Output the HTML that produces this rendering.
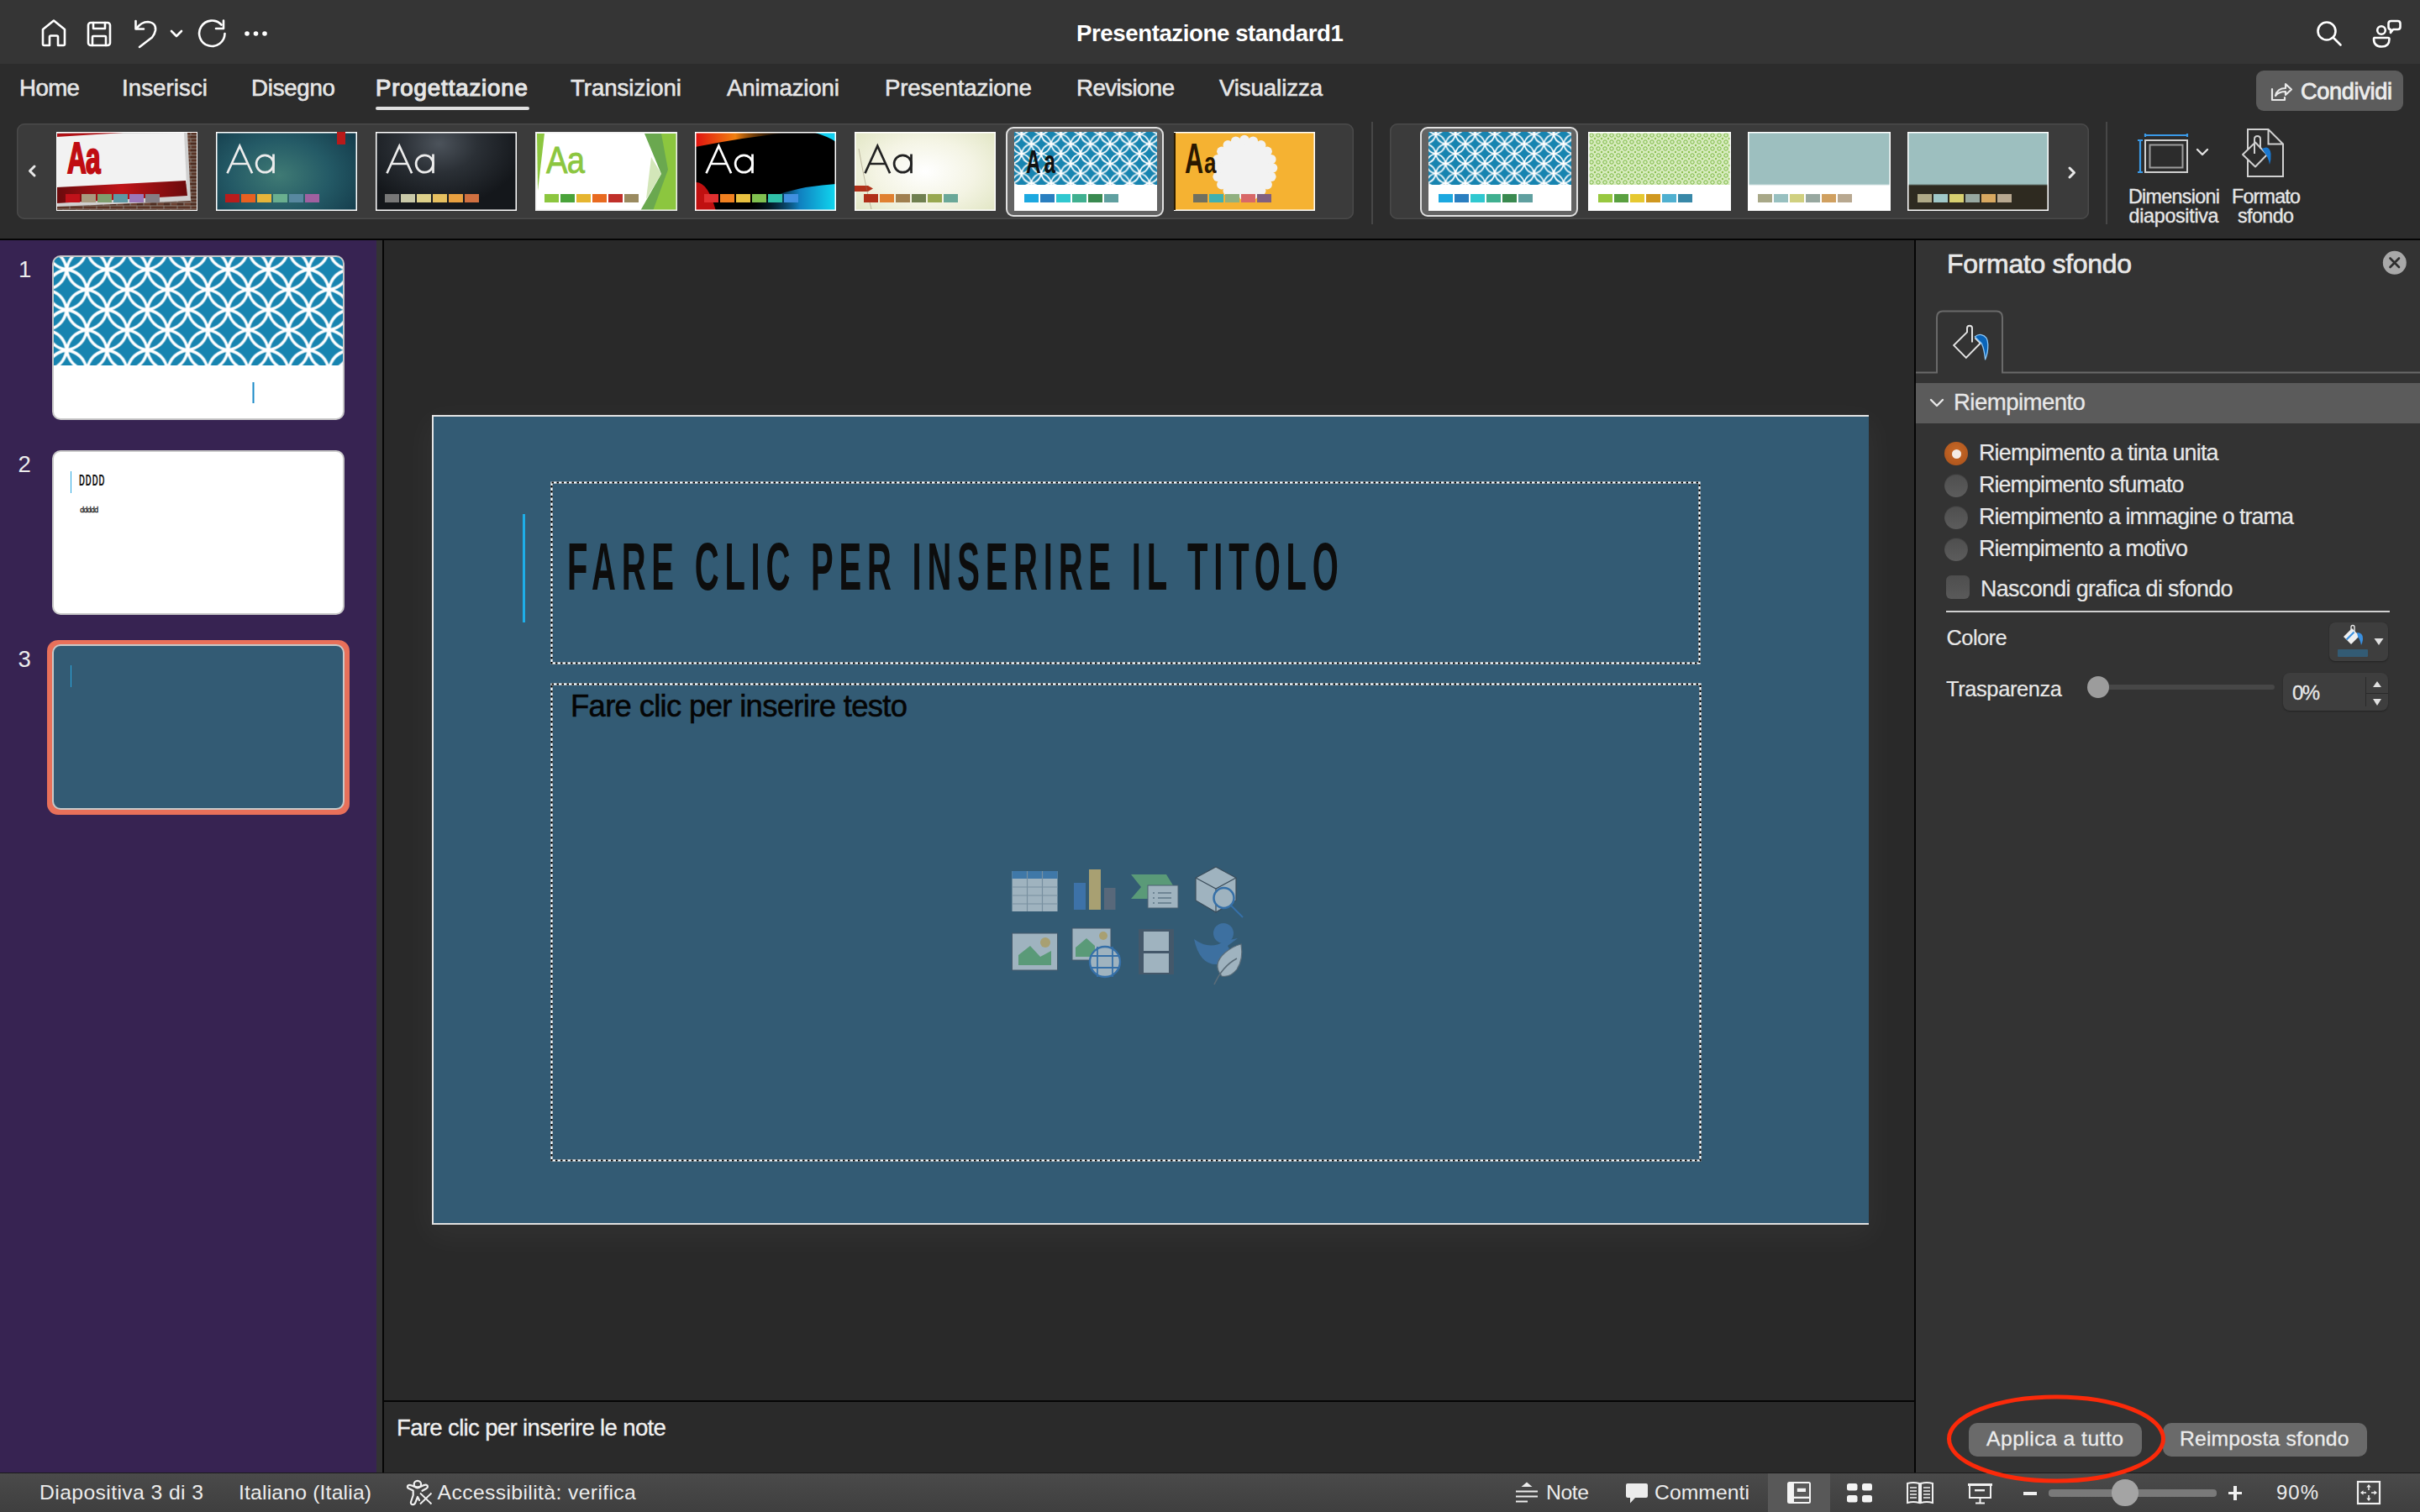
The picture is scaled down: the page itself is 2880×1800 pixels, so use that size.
<!DOCTYPE html><html><head><meta charset="utf-8"><style>
html,body{margin:0;padding:0;width:2880px;height:1800px;overflow:hidden;background:#282828;}
body{position:relative;font-family:"Liberation Sans",sans-serif;}
body>div,body>svg{position:absolute;}
.t{white-space:nowrap;}
</style></head><body>
<div style="left:0px;top:0px;width:2880px;height:76px;background:#353535"></div>
<div style="left:0px;top:76px;width:2880px;height:208px;background:#2c2c2c"></div>
<div style="left:0px;top:284px;width:2880px;height:2px;background:#050505"></div>
<div style="left:0px;top:286px;width:448px;height:1468px;background:#372352"></div>
<div style="left:448px;top:286px;width:7px;height:1468px;background:#333333"></div>
<div style="left:455px;top:286px;width:2px;height:1468px;background:#050505"></div>
<div style="left:457px;top:286px;width:1821px;height:1382px;background:#292929"></div>
<div style="left:457px;top:1667px;width:1821px;height:2px;background:#050505"></div>
<div style="left:457px;top:1669px;width:1821px;height:85px;background:#2a2a2a"></div>
<div style="left:2278px;top:286px;width:2px;height:1468px;background:#050505"></div>
<div style="left:2280px;top:286px;width:600px;height:1468px;background:#333333"></div>
<div style="left:0px;top:1754px;width:2880px;height:46px;background:linear-gradient(#4a4a4a,#3f3f3f)"></div>
<div style="left:0px;top:1753px;width:2880px;height:1px;background:#1a1a1a"></div>
<div class="t" style="left:1281.0px;top:26.2px;font-size:27.62px;line-height:27.62px;color:#ffffff;font-weight:700;letter-spacing:-0.41px;">Presentazione standard1</div>
<svg style="left:46px;top:20px;" width="36" height="38" viewBox="0 0 36 38"><path d="M5 15 L18 4.5 L31 15 V32.5 Q31 34 29.5 34 H23 V24 Q23 22.5 21.5 22.5 H14.5 Q13 22.5 13 24 V34 H6.5 Q5 34 5 32.5 Z" fill="none" stroke="#ffffff" stroke-width="2.6" stroke-linecap="round" stroke-linejoin="round"/></svg>
<svg style="left:100px;top:22px;" width="36" height="36" viewBox="0 0 36 36"><rect x="5" y="5" width="26" height="27" rx="3" fill="none" stroke="#ffffff" stroke-width="2.6" stroke-linecap="round" stroke-linejoin="round"/><path d="M11 5 V12 H25 V5" fill="none" stroke="#ffffff" stroke-width="2.6" stroke-linecap="round" stroke-linejoin="round"/><path d="M10 32 V22 Q10 21 11 21 H25 Q26 21 26 22 V32" fill="none" stroke="#ffffff" stroke-width="2.6" stroke-linecap="round" stroke-linejoin="round"/></svg>
<svg style="left:156px;top:20px;" width="36" height="40" viewBox="0 0 36 40"><path d="M5.5 5 V14.5 H15" fill="none" stroke="#ffffff" stroke-width="2.6" stroke-linecap="round" stroke-linejoin="round"/><path d="M6.5 14 Q12 6 20 6 Q30 7 29 16 Q28 21 25 24.5 L10 36" fill="none" stroke="#ffffff" stroke-width="2.6" stroke-linecap="round" stroke-linejoin="round"/></svg>
<svg style="left:200px;top:32px;" width="20" height="16" viewBox="0 0 20 16"><path d="M4 5 L10 11 L16 5" fill="none" stroke="#ffffff" stroke-width="2.6" stroke-linecap="round" stroke-linejoin="round"/></svg>
<svg style="left:232px;top:20px;" width="40" height="40" viewBox="0 0 40 40"><path d="M31.5 9.5 A15.2 15.2 0 1 0 35.5 20" fill="none" stroke="#ffffff" stroke-width="2.6" stroke-linecap="round" stroke-linejoin="round"/><path d="M25 14 H34 V4.5" fill="none" stroke="#ffffff" stroke-width="2.6" stroke-linecap="round" stroke-linejoin="round"/></svg>
<svg style="left:290px;top:34px;" width="32" height="12" viewBox="0 0 32 12"><circle cx="4.0" cy="6" r="2.8" fill="#ffffff"/><circle cx="14.5" cy="6" r="2.8" fill="#ffffff"/><circle cx="25.0" cy="6" r="2.8" fill="#ffffff"/></svg>
<svg style="left:2752px;top:20px;" width="40" height="40" viewBox="0 0 40 40"><circle cx="17" cy="17" r="10.5" fill="none" stroke="#ffffff" stroke-width="2.6" stroke-linecap="round" stroke-linejoin="round"/><path d="M25 25 L33.5 33.5" fill="none" stroke="#ffffff" stroke-width="2.6" stroke-linecap="round" stroke-linejoin="round"/></svg>
<svg style="left:2820px;top:20px;" width="40" height="40" viewBox="0 0 40 40"><circle cx="14" cy="16" r="4.8" fill="none" stroke="#ffffff" stroke-width="2.6" stroke-linecap="round" stroke-linejoin="round"/><path d="M5.5 25 H22 Q23.5 25 23.5 26.5 Q23.5 35.5 14.5 35.5 Q5 35.5 5 26.5 Q5 25 6.5 25 Z" fill="none" stroke="#ffffff" stroke-width="2.6" stroke-linecap="round" stroke-linejoin="round"/><path d="M22.5 8 Q22.5 5 25.5 5 H33.5 Q36.5 5 36.5 8 V12 Q36.5 15 33.5 15 H28 L25 19 V15 Q22.5 15 22.5 12 Z" fill="none" stroke="#ffffff" stroke-width="2.6" stroke-linecap="round" stroke-linejoin="round"/></svg>
<div class="t" style="left:23.0px;top:90.6px;font-size:27.62px;line-height:27.62px;color:#e6e6e6;font-weight:400;letter-spacing:-0.56px;-webkit-text-stroke:0.6px #e6e6e6;">Home</div>
<div class="t" style="left:145.0px;top:90.6px;font-size:27.62px;line-height:27.62px;color:#e6e6e6;font-weight:400;letter-spacing:0.09px;-webkit-text-stroke:0.6px #e6e6e6;">Inserisci</div>
<div class="t" style="left:299.0px;top:90.6px;font-size:27.62px;line-height:27.62px;color:#e6e6e6;font-weight:400;letter-spacing:-0.22px;-webkit-text-stroke:0.6px #e6e6e6;">Disegno</div>
<div class="t" style="left:447.0px;top:90.6px;font-size:27.62px;line-height:27.62px;color:#e6e6e6;font-weight:400;letter-spacing:0.88px;-webkit-text-stroke:1.2px #e6e6e6;">Progettazione</div>
<div class="t" style="left:679.0px;top:90.6px;font-size:27.62px;line-height:27.62px;color:#e6e6e6;font-weight:400;letter-spacing:-0.05px;-webkit-text-stroke:0.6px #e6e6e6;">Transizioni</div>
<div class="t" style="left:865.0px;top:90.6px;font-size:27.62px;line-height:27.62px;color:#e6e6e6;font-weight:400;letter-spacing:-0.12px;-webkit-text-stroke:0.6px #e6e6e6;">Animazioni</div>
<div class="t" style="left:1053.0px;top:90.6px;font-size:27.62px;line-height:27.62px;color:#e6e6e6;font-weight:400;letter-spacing:-0.13px;-webkit-text-stroke:0.6px #e6e6e6;">Presentazione</div>
<div class="t" style="left:1281.0px;top:90.6px;font-size:27.62px;line-height:27.62px;color:#e6e6e6;font-weight:400;letter-spacing:-0.53px;-webkit-text-stroke:0.6px #e6e6e6;">Revisione</div>
<div class="t" style="left:1451.0px;top:90.6px;font-size:27.62px;line-height:27.62px;color:#e6e6e6;font-weight:400;letter-spacing:-0.09px;-webkit-text-stroke:0.6px #e6e6e6;">Visualizza</div>
<div style="left:447px;top:127px;width:183px;height:4px;background:#e0e0e0;border-radius:2px"></div>
<div style="left:2685px;top:84px;width:175px;height:48px;background:#5c5c5c;border-radius:9px"></div>
<svg style="left:2700px;top:94px;" width="30" height="30" viewBox="0 0 30 30"><path d="M4 12 V25 H19 V22" fill="none" stroke="#e8e8e8" stroke-width="2.2" stroke-linecap="round" stroke-linejoin="round"/><path d="M8 20 Q10 11 20 11 V6 L27 12.5 L20 19 V15 Q12 15 8 20 Z" fill="none" stroke="#e8e8e8" stroke-width="2.2" stroke-linecap="round" stroke-linejoin="round"/></svg>
<div class="t" style="left:2738.0px;top:95.4px;font-size:27.18px;line-height:27.18px;color:#ececec;font-weight:400;letter-spacing:-0.35px;-webkit-text-stroke:0.8px #ececec;">Condividi</div>
<div style="left:20px;top:147px;width:1591px;height:114px;background:#3b3b3b;border-radius:9px;box-shadow:inset 0 0 0 1.5px #4a4a4a"></div>
<div style="left:1654px;top:147px;width:832px;height:114px;background:#3b3b3b;border-radius:9px;box-shadow:inset 0 0 0 1.5px #4a4a4a"></div>
<div style="left:1632px;top:145px;width:2px;height:122px;background:#474747"></div>
<div style="left:2506px;top:145px;width:2px;height:122px;background:#474747"></div>
<svg style="left:28px;top:192px;" width="20" height="22" viewBox="0 0 20 22"><path d="M13 6 L7.5 11.5 L13 17" fill="none" stroke="#e8e8e8" stroke-width="3" stroke-linecap="round" stroke-linejoin="round"/></svg>
<svg style="left:2456px;top:194px;" width="20" height="22" viewBox="0 0 20 22"><path d="M7 6 L12.5 11.5 L7 17" fill="none" stroke="#e8e8e8" stroke-width="3" stroke-linecap="round" stroke-linejoin="round"/></svg>
<svg style="left:0;top:0;position:absolute" width="0" height="0"><defs><pattern id="shp1" patternUnits="userSpaceOnUse" width="23.4" height="23.4" x="-3" y="-9"><rect width="23.4" height="23.4" fill="#1784b0"/><path d="M0 0 C1.14 6.66 5.04 10.56 11.7 11.7 C10.56 5.04 6.66 1.14 0 0 Z" fill="none" stroke="#fff" stroke-width="1.7" stroke-linejoin="miter" stroke-miterlimit="3"/><path d="M23.4 0 C16.74 1.14 12.84 5.04 11.7 11.7 C18.36 10.56 22.26 6.66 23.4 0 Z" fill="none" stroke="#fff" stroke-width="1.7" stroke-linejoin="miter" stroke-miterlimit="3"/><path d="M0 23.4 C6.66 22.26 10.56 18.36 11.7 11.7 C5.04 12.84 1.14 16.74 0 23.4 Z" fill="none" stroke="#fff" stroke-width="1.7" stroke-linejoin="miter" stroke-miterlimit="3"/><path d="M23.4 23.4 C22.26 16.74 18.36 12.84 11.7 11.7 C12.84 18.36 16.74 22.26 23.4 23.4 Z" fill="none" stroke="#fff" stroke-width="1.7" stroke-linejoin="miter" stroke-miterlimit="3"/></pattern></defs></svg>
<svg style="left:67px;top:157px;" width="168" height="94" viewBox="0 0 168 94"><defs><linearGradient id="rb" x1="0" x2="1"><stop offset="0" stop-color="#6a0a0c"/><stop offset="0.5" stop-color="#c01418"/><stop offset="1" stop-color="#6a0a0c"/></linearGradient>
<pattern id="brick" patternUnits="userSpaceOnUse" width="16" height="8"><rect width="16" height="8" fill="#8a8078"/><rect x="0.5" y="0.5" width="15" height="3" fill="#5a3426"/><rect x="-7.5" y="4.5" width="15" height="3" fill="#4e2c20"/><rect x="8.5" y="4.5" width="15" height="3" fill="#6a4030"/></pattern></defs>
<rect width="168" height="94" fill="url(#brick)"/>
<polygon points="0,1 156,0 160,82 0,89" fill="#d0d0d0"/>
<polygon points="0,3 152,1 155,62 0,70" fill="#f2f2f2"/>
<polygon points="0,2 80,1 0,6" fill="#b01015"/>
<polygon points="0,66 154,58 156,76 0,85" fill="url(#rb)"/>
<text x="21" y="49.5" font-family="Liberation Sans" font-weight="700" font-size="51" fill="#c00c12" stroke="#c00c12" stroke-width="2.2" transform="scale(0.62,1)" style="letter-spacing:-1.5px">Aa</text></svg>
<div style="left:67px;top:157px;width:168px;height:94px;box-shadow:inset 0 0 0 1px #fff"></div>
<div style="left:78px;top:231px;width:17px;height:10px;background:#c0121a"></div>
<div style="left:97px;top:231px;width:17px;height:10px;background:#a89a7e"></div>
<div style="left:116px;top:231px;width:17px;height:10px;background:#7f9e6e"></div>
<div style="left:135px;top:231px;width:17px;height:10px;background:#5d98a4"></div>
<div style="left:154px;top:231px;width:17px;height:10px;background:#9b77b8"></div>
<div style="left:173px;top:231px;width:17px;height:10px;background:#857e85"></div>
<div style="left:257px;top:157px;width:168px;height:94px;background:radial-gradient(ellipse 70% 90% at 45% 55%,#3f7a74 0%,#245a66 50%,#123848 100%);box-shadow:inset 0 0 0 1.5px #fff"></div>
<div style="left:401px;top:157px;width:10px;height:15px;background:#b81a1a"></div>
<svg style="left:257px;top:157px;" width="80" height="60" viewBox="0 0 80 60"><path d="M13.5 49.2 L28.3 16.8 L43.1 49.2 M18.8 38 H37.8" fill="none" stroke="#ececec" stroke-width="2.7" stroke-linejoin="miter"/><circle cx="58.3" cy="38" r="10.2" fill="none" stroke="#ececec" stroke-width="2.7"/><path d="M68.5 26.5 V49.2" stroke="#ececec" stroke-width="2.7"/></svg>
<div style="left:268px;top:231px;width:17px;height:10px;background:#b81c1c"></div>
<div style="left:287px;top:231px;width:17px;height:10px;background:#e86020"></div>
<div style="left:306px;top:231px;width:17px;height:10px;background:#e6b53a"></div>
<div style="left:325px;top:231px;width:17px;height:10px;background:#6aaf8f"></div>
<div style="left:344px;top:231px;width:17px;height:10px;background:#5888a0"></div>
<div style="left:363px;top:231px;width:17px;height:10px;background:#a060a0"></div>
<div style="left:447px;top:157px;width:168px;height:94px;background:radial-gradient(ellipse 60% 80% at 45% 15%,#4c535b 0%,#2b3036 45%,#14171b 100%);box-shadow:inset 0 0 0 1.5px #fff"></div>
<svg style="left:447px;top:157px;" width="80" height="60" viewBox="0 0 80 60"><path d="M13.5 49.2 L28.3 16.8 L43.1 49.2 M18.8 38 H37.8" fill="none" stroke="#ececec" stroke-width="2.7" stroke-linejoin="miter"/><circle cx="58.3" cy="38" r="10.2" fill="none" stroke="#ececec" stroke-width="2.7"/><path d="M68.5 26.5 V49.2" stroke="#ececec" stroke-width="2.7"/></svg>
<div style="left:458px;top:231px;width:17px;height:10px;background:#777777"></div>
<div style="left:477px;top:231px;width:17px;height:10px;background:#c8c8a8"></div>
<div style="left:496px;top:231px;width:17px;height:10px;background:#ddd08a"></div>
<div style="left:515px;top:231px;width:17px;height:10px;background:#e6c060"></div>
<div style="left:534px;top:231px;width:17px;height:10px;background:#e8a040"></div>
<div style="left:553px;top:231px;width:17px;height:10px;background:#d07040"></div>
<svg style="left:637px;top:157px;" width="169" height="94" viewBox="0 0 169 94"><rect width="169" height="94" fill="#fff"/>
<polygon points="2,2 11,2 3,70" fill="#8cc63f"/>
<polygon points="130,2 169,2 169,94 125,94 150,50" fill="#6aa84f"/>
<polygon points="150,2 169,2 169,94 140,94 158,45" fill="#8cc63f"/>
<polygon points="138,30 150,50 132,80" fill="#c8e0a8" opacity="0.8"/></svg>
<div style="left:637px;top:157px;width:169px;height:94px;box-shadow:inset 0 0 0 1.5px #f0f0f0"></div>
<div class="t" style="left:650.0px;top:167.9px;font-size:45.06px;line-height:45.06px;color:#8cc63f;font-weight:400;letter-spacing:-1.00px;transform:scaleX(0.850);transform-origin:0 0;-webkit-text-stroke:0.8px #8cc63f;">Aa</div>
<div style="left:648px;top:231px;width:17px;height:10px;background:#8cc63f"></div>
<div style="left:667px;top:231px;width:17px;height:10px;background:#4aa33a"></div>
<div style="left:686px;top:231px;width:17px;height:10px;background:#e6b530"></div>
<div style="left:705px;top:231px;width:17px;height:10px;background:#e86a20"></div>
<div style="left:724px;top:231px;width:17px;height:10px;background:#c0302a"></div>
<div style="left:743px;top:231px;width:17px;height:10px;background:#9a8a60"></div>
<svg style="left:827px;top:157px;" width="168" height="94" viewBox="0 0 168 94"><defs><linearGradient id="w1" x1="0" x2="1"><stop offset="0" stop-color="#e01010"/><stop offset="0.4" stop-color="#f08010"/><stop offset="1" stop-color="#000" stop-opacity="0"/></linearGradient>
<linearGradient id="w2" x1="0" x2="1"><stop offset="0" stop-color="#000" stop-opacity="0"/><stop offset="0.6" stop-color="#1080c0"/><stop offset="1" stop-color="#10d8f0"/></linearGradient></defs>
<rect width="168" height="94" fill="#000"/>
<path d="M0 0 H120 Q60 6 0 18 Z" fill="url(#w1)"/>
<path d="M0 60 Q15 58 25 94 H0 Z" fill="#c01010"/>
<path d="M168 62 Q100 66 60 94 H168 Z" fill="url(#w2)"/>
<path d="M168 0 H140 Q160 6 168 12 Z" fill="#10d0f0"/></svg>
<div style="left:827px;top:157px;width:168px;height:94px;box-shadow:inset 0 0 0 1.5px #fff"></div>
<svg style="left:827px;top:157px;" width="80" height="60" viewBox="0 0 80 60"><path d="M13.5 49.2 L28.3 16.8 L43.1 49.2 M18.8 38 H37.8" fill="none" stroke="#ffffff" stroke-width="2.7" stroke-linejoin="miter"/><circle cx="58.3" cy="38" r="10.2" fill="none" stroke="#ffffff" stroke-width="2.7"/><path d="M68.5 26.5 V49.2" stroke="#ffffff" stroke-width="2.7"/></svg>
<div style="left:838px;top:231px;width:17px;height:10px;background:#e03030"></div>
<div style="left:857px;top:231px;width:17px;height:10px;background:#f08020"></div>
<div style="left:876px;top:231px;width:17px;height:10px;background:#e8c040"></div>
<div style="left:895px;top:231px;width:17px;height:10px;background:#80c050"></div>
<div style="left:914px;top:231px;width:17px;height:10px;background:#30c0a8"></div>
<div style="left:933px;top:231px;width:17px;height:10px;background:#4090e0"></div>
<div style="left:1017px;top:157px;width:168px;height:94px;background:radial-gradient(ellipse 70% 80% at 50% 50%,#ffffff 0%,#f4f4e4 50%,#dfe4c0 100%);box-shadow:inset 0 0 0 1.5px #fff"></div>
<svg style="left:1017px;top:157px;" width="30" height="94" viewBox="0 0 30 94"><path d="M0 64 H16 L22 67.5 L16 71 H0 Z" fill="#b03018"/><path d="M5 20 Q12 60 20 92" stroke="#8a7a60" stroke-width="0.8" fill="none" opacity="0.6"/></svg>
<svg style="left:1016px;top:157px;" width="80" height="60" viewBox="0 0 80 60"><path d="M13.5 49.2 L28.3 16.8 L43.1 49.2 M18.8 38 H37.8" fill="none" stroke="#222222" stroke-width="2.7" stroke-linejoin="miter"/><circle cx="58.3" cy="38" r="10.2" fill="none" stroke="#222222" stroke-width="2.7"/><path d="M68.5 26.5 V49.2" stroke="#222222" stroke-width="2.7"/></svg>
<div style="left:1028px;top:231px;width:17px;height:10px;background:#b03018"></div>
<div style="left:1047px;top:231px;width:17px;height:10px;background:#e08030"></div>
<div style="left:1066px;top:231px;width:17px;height:10px;background:#a08050"></div>
<div style="left:1085px;top:231px;width:17px;height:10px;background:#708050"></div>
<div style="left:1104px;top:231px;width:17px;height:10px;background:#98a850"></div>
<div style="left:1123px;top:231px;width:17px;height:10px;background:#6aa898"></div>
<div style="left:1197px;top:150.5px;width:188px;height:107px;border:2px solid #e0e0e0;border-radius:9px;background:#636363;box-sizing:border-box"></div>
<svg style="left:1207px;top:157px;" width="170" height="94" viewBox="0 0 170 94"><rect width="170" height="63" fill="url(#shp1)"/><rect y="63" width="170" height="31" fill="#fff"/></svg>
<div class="t" style="left:1220.5px;top:172.8px;font-size:39.24px;line-height:39.24px;color:#111111;font-weight:700;letter-spacing:6.28px;transform:scaleX(0.620);transform-origin:0 0;">Aa</div>
<div style="left:1219px;top:231px;width:17px;height:10px;background:#1ca8e0"></div>
<div style="left:1238px;top:231px;width:17px;height:10px;background:#2a7fc0"></div>
<div style="left:1257px;top:231px;width:17px;height:10px;background:#30c8d0"></div>
<div style="left:1276px;top:231px;width:17px;height:10px;background:#40b090"></div>
<div style="left:1295px;top:231px;width:17px;height:10px;background:#3a8a50"></div>
<div style="left:1314px;top:231px;width:17px;height:10px;background:#60a0a0"></div>
<div style="left:1397px;top:157px;width:168px;height:94px;background:#f5b232;box-shadow:inset 0 0 0 1.5px #fff"></div>
<div style="left:1397px;top:158px;width:2px;height:92px;background:#2a1a00"></div>
<svg style="left:1397px;top:157px;" width="168" height="94" viewBox="0 0 168 94"><circle cx="84" cy="43" r="34.199999999999996" fill="#f2f2f2"/><circle cx="117.5" cy="43.0" r="5.8" fill="#f2f2f2"/><circle cx="115.8" cy="53.3" r="5.8" fill="#f2f2f2"/><circle cx="111.1" cy="62.7" r="5.8" fill="#f2f2f2"/><circle cx="103.7" cy="70.1" r="5.8" fill="#f2f2f2"/><circle cx="94.3" cy="74.8" r="5.8" fill="#f2f2f2"/><circle cx="84.0" cy="76.5" r="5.8" fill="#f2f2f2"/><circle cx="73.7" cy="74.8" r="5.8" fill="#f2f2f2"/><circle cx="64.3" cy="70.1" r="5.8" fill="#f2f2f2"/><circle cx="56.9" cy="62.7" r="5.8" fill="#f2f2f2"/><circle cx="52.2" cy="53.3" r="5.8" fill="#f2f2f2"/><circle cx="50.5" cy="43.0" r="5.8" fill="#f2f2f2"/><circle cx="52.2" cy="32.7" r="5.8" fill="#f2f2f2"/><circle cx="56.9" cy="23.3" r="5.8" fill="#f2f2f2"/><circle cx="64.3" cy="15.9" r="5.8" fill="#f2f2f2"/><circle cx="73.7" cy="11.2" r="5.8" fill="#f2f2f2"/><circle cx="84.0" cy="9.5" r="5.8" fill="#f2f2f2"/><circle cx="94.3" cy="11.2" r="5.8" fill="#f2f2f2"/><circle cx="103.7" cy="15.9" r="5.8" fill="#f2f2f2"/><circle cx="111.1" cy="23.3" r="5.8" fill="#f2f2f2"/><circle cx="115.8" cy="32.7" r="5.8" fill="#f2f2f2"/></svg>
<div class="t" style="left:1410.0px;top:164.2px;font-size:49.42px;line-height:49.42px;color:#2a1800;font-weight:700;letter-spacing:0.00px;transform:scaleX(0.620);transform-origin:0 0;">A</div>
<div class="t" style="left:1433.0px;top:176.5px;font-size:34.88px;line-height:34.88px;color:#2a1800;font-weight:700;letter-spacing:0.00px;transform:scaleX(0.750);transform-origin:0 0;">a</div>
<div style="left:1420px;top:231px;width:17px;height:10px;background:#707060"></div>
<div style="left:1439px;top:231px;width:17px;height:10px;background:#40b0b0"></div>
<div style="left:1458px;top:231px;width:17px;height:10px;background:#90b080"></div>
<div style="left:1477px;top:231px;width:17px;height:10px;background:#d86868"></div>
<div style="left:1496px;top:231px;width:17px;height:10px;background:#806080"></div>
<div style="left:1690px;top:150.5px;width:188px;height:107px;border:2px solid #e0e0e0;border-radius:9px;background:#636363;box-sizing:border-box"></div>
<svg style="left:1700px;top:157px;" width="170" height="94" viewBox="0 0 170 94"><rect width="170" height="63" fill="url(#shp1)"/><rect y="63" width="170" height="31" fill="#fff"/></svg>
<div style="left:1712px;top:231px;width:17px;height:10px;background:#1ca8e0"></div>
<div style="left:1731px;top:231px;width:17px;height:10px;background:#2a7fc0"></div>
<div style="left:1750px;top:231px;width:17px;height:10px;background:#30c8d0"></div>
<div style="left:1769px;top:231px;width:17px;height:10px;background:#40b090"></div>
<div style="left:1788px;top:231px;width:17px;height:10px;background:#3a8a50"></div>
<div style="left:1807px;top:231px;width:17px;height:10px;background:#60a0a0"></div>
<svg style="left:1890px;top:157px;" width="170" height="94" viewBox="0 0 170 94"><defs><pattern id="gdot" patternUnits="userSpaceOnUse" width="8" height="8"><rect width="8" height="8" fill="#d8ecc0"/><circle cx="4" cy="4" r="2.2" fill="none" stroke="#7ab840" stroke-width="1"/><circle cx="0" cy="0" r="1.2" fill="#8cc050"/><circle cx="8" cy="8" r="1.2" fill="#8cc050"/><circle cx="8" cy="0" r="1.2" fill="#8cc050"/><circle cx="0" cy="8" r="1.2" fill="#8cc050"/></pattern></defs>
<rect width="170" height="94" fill="#fff"/><rect x="1" y="1" width="168" height="62" fill="url(#gdot)"/></svg>
<div style="left:1890px;top:157px;width:170px;height:94px;box-shadow:inset 0 0 0 1.5px #fff"></div>
<div style="left:1902px;top:231px;width:17px;height:10px;background:#98c840"></div>
<div style="left:1921px;top:231px;width:17px;height:10px;background:#5aa040"></div>
<div style="left:1940px;top:231px;width:17px;height:10px;background:#e6c830"></div>
<div style="left:1959px;top:231px;width:17px;height:10px;background:#d09820"></div>
<div style="left:1978px;top:231px;width:17px;height:10px;background:#50b0d0"></div>
<div style="left:1997px;top:231px;width:17px;height:10px;background:#3888a8"></div>
<div style="left:2080px;top:157px;width:170px;height:94px;background:linear-gradient(#9dbfbf 0,#9dbfbf 62px,#fff 64px);box-shadow:inset 0 0 0 1.5px #fff"></div>
<div style="left:2092px;top:231px;width:17px;height:10px;background:#a8a888"></div>
<div style="left:2111px;top:231px;width:17px;height:10px;background:#98c0c0"></div>
<div style="left:2130px;top:231px;width:17px;height:10px;background:#d0d080"></div>
<div style="left:2149px;top:231px;width:17px;height:10px;background:#98a8a0"></div>
<div style="left:2168px;top:231px;width:17px;height:10px;background:#d0a060"></div>
<div style="left:2187px;top:231px;width:17px;height:10px;background:#b8a890"></div>
<div style="left:2270px;top:157px;width:168px;height:94px;background:linear-gradient(#9dbfbf 0,#9dbfbf 62px,#2e2a20 64px);box-shadow:inset 0 0 0 1.5px #fff"></div>
<div style="left:2282px;top:231px;width:17px;height:10px;background:#b0aa88"></div>
<div style="left:2301px;top:231px;width:17px;height:10px;background:#a0c8c8"></div>
<div style="left:2320px;top:231px;width:17px;height:10px;background:#d8d070"></div>
<div style="left:2339px;top:231px;width:17px;height:10px;background:#98a8a0"></div>
<div style="left:2358px;top:231px;width:17px;height:10px;background:#d8a860"></div>
<div style="left:2377px;top:231px;width:17px;height:10px;background:#b8a890"></div>
<svg style="left:2540px;top:154px;" width="70" height="56" viewBox="0 0 70 56"><path d="M13 5 V9 M63 5 V9 M13 7 H63" stroke="#3a9ae8" stroke-width="2.2" fill="none"/>
<path d="M4 13 H10 M4 51 H10 M7 13 V51" stroke="#3a9ae8" stroke-width="2.2" fill="none"/>
<rect x="13" y="13" width="50" height="38" fill="none" stroke="#cfcfcf" stroke-width="2"/><rect x="18.5" y="18.5" width="39" height="27" fill="none" stroke="#9c9c9c" stroke-width="2"/></svg>
<svg style="left:2612px;top:174px;" width="20" height="16" viewBox="0 0 20 16"><path d="M3 4 L9 10 L15 4" fill="none" stroke="#e0e0e0" stroke-width="2.4" stroke-linecap="round" stroke-linejoin="round"/></svg>
<svg style="left:2665px;top:150px;" width="56" height="64" viewBox="0 0 56 64"><path d="M10 4 H34.5 L52 21.5 V60 H10 Z M34.5 4 V21.5 H52" fill="none" stroke="#d0d0d0" stroke-width="2"/>
<path d="M4 34 L19 19.5 L33 34 L19 48.5 Z" fill="#2c2c2c" stroke="#d0d0d0" stroke-width="2" stroke-linejoin="round"/>
<path d="M18 33 V15.5 Q18 12 21.5 12 Q25 12 25 15.5 V27" fill="none" stroke="#d0d0d0" stroke-width="2"/>
<path d="M27 27 Q36 22 37.5 33 Q38 40 36 46 Q35 38 29.5 31 Z" fill="#1a78d0"/></svg>
<div class="t" style="left:2533.0px;top:222.7px;font-size:23.26px;line-height:23.26px;color:#e6e6e6;font-weight:400;letter-spacing:-0.67px;-webkit-text-stroke:0.4px #e6e6e6;">Dimensioni</div>
<div class="t" style="left:2533.6px;top:246.3px;font-size:23.26px;line-height:23.26px;color:#e6e6e6;font-weight:400;letter-spacing:-0.29px;-webkit-text-stroke:0.4px #e6e6e6;">diapositiva</div>
<div class="t" style="left:2656.0px;top:222.7px;font-size:23.26px;line-height:23.26px;color:#e6e6e6;font-weight:400;letter-spacing:-0.76px;-webkit-text-stroke:0.4px #e6e6e6;">Formato</div>
<div class="t" style="left:2663.0px;top:246.3px;font-size:23.26px;line-height:23.26px;color:#e6e6e6;font-weight:400;letter-spacing:-0.57px;-webkit-text-stroke:0.4px #e6e6e6;">sfondo</div>
<div class="t" style="left:22.0px;top:306.6px;font-size:27.62px;line-height:27.62px;color:#ececec;font-weight:400;letter-spacing:0.00px;">1</div>
<div class="t" style="left:21.5px;top:538.9px;font-size:27.62px;line-height:27.62px;color:#ececec;font-weight:400;letter-spacing:0.00px;">2</div>
<div class="t" style="left:21.5px;top:770.6px;font-size:27.62px;line-height:27.62px;color:#ececec;font-weight:400;letter-spacing:0.00px;">3</div>
<svg style="left:62px;top:304px;" width="348" height="196" viewBox="0 0 348 196"><defs><pattern id="shp2" patternUnits="userSpaceOnUse" width="48" height="48" x="-6.6" y="-7.2"><rect width="48" height="48" fill="#1784b0"/><path d="M0 0 C2.34 13.66 10.34 21.66 24 24 C21.66 10.34 13.66 2.34 0 0 Z" fill="none" stroke="#fff" stroke-width="3.4" stroke-linejoin="miter" stroke-miterlimit="3"/><path d="M48 0 C34.34 2.34 26.34 10.34 24 24 C37.66 21.66 45.66 13.66 48 0 Z" fill="none" stroke="#fff" stroke-width="3.4" stroke-linejoin="miter" stroke-miterlimit="3"/><path d="M0 48 C13.66 45.66 21.66 37.66 24 24 C10.34 26.34 2.34 34.34 0 48 Z" fill="none" stroke="#fff" stroke-width="3.4" stroke-linejoin="miter" stroke-miterlimit="3"/><path d="M48 48 C45.66 34.34 37.66 26.34 24 24 C26.34 37.66 34.34 45.66 48 48 Z" fill="none" stroke="#fff" stroke-width="3.4" stroke-linejoin="miter" stroke-miterlimit="3"/></pattern><clipPath id="c1"><rect x="1" y="1" width="346" height="194" rx="9"/></clipPath></defs><g clip-path="url(#c1)"><rect width="348" height="196" fill="#fff"/><rect width="348" height="131" fill="url(#shp2)"/></g><rect x="1" y="1" width="346" height="194" rx="9" fill="none" stroke="#c8c8c8" stroke-width="2"/><rect x="238.5" y="151" width="2" height="25" fill="#1a8ac8"/></svg>
<div style="left:62px;top:536px;width:348px;height:196px;background:#fff;border:2px solid #c8c8c8;border-radius:10px;box-sizing:border-box"></div>
<div style="left:84px;top:561px;width:1.3px;height:26px;background:#2aa8e0"></div>
<div class="t" style="left:94.2px;top:563.7px;font-size:17.44px;line-height:17.44px;color:#111;font-weight:700;letter-spacing:1.63px;transform:scaleX(0.550);transform-origin:0 0;">DDDD</div>
<div class="t" style="left:95.2px;top:602.9px;font-size:8.72px;line-height:8.72px;color:#222;font-weight:400;letter-spacing:-0.56px;-webkit-text-stroke:0.3px #222;">ddddd</div>
<div style="left:56px;top:762px;width:360px;height:208px;background:#e8705a;border-radius:13px"></div>
<div style="left:62px;top:767px;width:348px;height:197px;background:#335b74;border:2px solid #c8c8c8;border-radius:10px;box-sizing:border-box"></div>
<div style="left:84px;top:792px;width:1.3px;height:26px;background:#2aa8e0"></div>
<div style="left:514px;top:494px;width:1710px;height:964px;box-shadow:0 10px 36px 6px rgba(255,255,255,0.04)"></div>
<div style="left:514px;top:494px;width:1710px;height:964px;background:#335b74"></div>
<div style="left:514px;top:494px;width:1710px;height:2px;background:#e4e4e4"></div>
<div style="left:514px;top:494px;width:2px;height:964px;background:#e4e4e4"></div>
<div style="left:514px;top:1456px;width:1710px;height:2px;background:#e0e0e0"></div>
<svg style="left:655px;top:573px;" width="1369" height="218" viewBox="0 0 1369 218"><rect x="1.5" y="1.5" width="1366" height="215" fill="none" stroke="#fff" stroke-width="2.2"/><rect x="1.5" y="1.5" width="1366" height="215" fill="none" stroke="#000" stroke-width="2.2" stroke-dasharray="2.5 3.5"/></svg>
<svg style="left:655px;top:813px;" width="1370" height="570" viewBox="0 0 1370 570"><rect x="1.5" y="1.5" width="1367" height="567" fill="none" stroke="#fff" stroke-width="2.2"/><rect x="1.5" y="1.5" width="1367" height="567" fill="none" stroke="#000" stroke-width="2.2" stroke-dasharray="2.5 3.5"/></svg>
<div style="left:622px;top:612px;width:3px;height:129px;background:#1eaee8"></div>
<div class="t" style="left:675.0px;top:635.3px;font-size:79.94px;line-height:79.94px;color:#0d0d0d;font-weight:700;letter-spacing:13.61px;transform:scaleX(0.500);transform-origin:0 0;">FARE CLIC PER INSERIRE IL TITOLO</div>
<div class="t" style="left:472.0px;top:1685.6px;font-size:27.62px;line-height:27.62px;color:#f0f0f0;font-weight:400;letter-spacing:-0.68px;-webkit-text-stroke:0.3px #f0f0f0;">Fare clic per inserire le note</div>
<div class="t" style="left:679.0px;top:823.2px;font-size:36.34px;line-height:36.34px;color:#050505;font-weight:400;letter-spacing:-0.63px;-webkit-text-stroke:0.6px #050505;">Fare clic per inserire testo</div>
<svg style="left:1180px;top:1020px;" width="320" height="170" viewBox="0 0 320 170">
<g opacity="1">
<!-- table -->
<rect x="24.5" y="17" width="54" height="48" fill="#9fb3bf"/>
<rect x="24.5" y="17" width="54" height="9" fill="#3f78a8"/>
<path d="M24.5 36 H78.5 M24.5 46 H78.5 M24.5 56 H78.5 M42.5 17 V65 M60.5 17 V65" stroke="#7890a0" stroke-width="1.2"/>
<!-- chart -->
<rect x="98" y="31" width="14" height="32" fill="#3d72a8"/>
<rect x="116" y="15" width="14" height="48" fill="#a8a072"/>
<rect x="134" y="37" width="13.5" height="26" fill="#58687a"/>
<!-- smartart -->
<path d="M166 21 H208 L216 34 L216 50 H166 L178 36 Z" fill="#5a9a78"/>
<rect x="186" y="34" width="36" height="27" fill="#9fb3bf" stroke="#4a6070" stroke-width="1"/>
<path d="M192 43 H194 M198 43 H214 M192 49 H194 M198 49 H214 M192 55 H194 M198 55 H214" stroke="#607888" stroke-width="1.4"/>
<!-- 3d -->
<path d="M267 12 L291 25 V52 L267 66 L243 52 V25 Z" fill="#9fb3bf" stroke="#3a4c5a" stroke-width="1.2"/>
<path d="M243 25 L267 38 L291 25 M267 38 V66" stroke="#3a4c5a" stroke-width="1.2" fill="none"/>
<circle cx="276.5" cy="49" r="12" fill="#9fb3bf" stroke="#3670a8" stroke-width="2.5"/>
<path d="M285 58 L299 72" stroke="#3670a8" stroke-width="2"/>
<!-- picture -->
<rect x="24.5" y="91" width="54" height="44" fill="#9fb3bf" stroke="#44586a" stroke-width="1"/>
<path d="M32 129 V117 L46 106 L58 119 L71 112 V129 Z" fill="#5a9a78"/>
<circle cx="64" cy="102" r="6" fill="#a8a072"/>
<!-- online picture -->
<rect x="96" y="85" width="46" height="38" fill="#9fb3bf" stroke="#44586a" stroke-width="1"/>
<path d="M100 119 V108 L113 97 L123 106 V119 Z" fill="#5a9a78"/>
<circle cx="133" cy="94" r="5" fill="#a8a072"/>
<circle cx="135" cy="125" r="18" fill="#9fb3bf" stroke="#3670a8" stroke-width="2.4"/>
<path d="M117 118 H153 M117 132 H153 M126 107 V143 M144 107 V143" stroke="#3670a8" stroke-width="1.8"/>
<!-- video -->
<rect x="175" y="86" width="42" height="54" fill="#44586a"/>
<rect x="181" y="89" width="30" height="23" fill="#9fb3bf"/>
<rect x="181" y="115" width="30" height="23" fill="#9fb3bf"/>
<!-- icons -->
<circle cx="276" cy="91" r="12" fill="#3d70a0"/>
<path d="M241 98 Q260 112 278 100 L293 97 L281 106 Q290 120 270 128 Q248 130 241 98 Z" fill="#3d70a0"/>
<path d="M274 142 Q262 128 278 114 Q288 106 297 104 Q300 122 292 134 Q284 144 274 142 Z" fill="#9fb3bf" stroke="#5a6c78" stroke-width="1.2"/>
<path d="M265 152 Q275 130 292 121" stroke="#5a6c78" stroke-width="1.6" fill="none"/>
</g></svg>
<div class="t" style="left:2317.0px;top:297.5px;font-size:31.98px;line-height:31.98px;color:#e8e8e8;font-weight:400;letter-spacing:-0.30px;-webkit-text-stroke:0.7px #e8e8e8;">Formato sfondo</div>
<svg style="left:2834px;top:297px;" width="32" height="32" viewBox="0 0 32 32"><circle cx="15.8" cy="15.8" r="14" fill="#a8a8a8"/><path d="M10.5 10.5 L21 21 M21 10.5 L10.5 21" stroke="#2e2e2e" stroke-width="2.6" stroke-linecap="round"/></svg>
<svg style="left:2280px;top:366px;" width="600" height="80" viewBox="0 0 600 80"><path d="M0 77.5 H25 V12 Q25 4.5 32 4.5 H96 Q103 4.5 103 12 V77.5 H600" fill="none" stroke="#6a6a6a" stroke-width="2"/></svg>
<svg style="left:2310px;top:380px;" width="70" height="56" viewBox="0 0 70 56"><path d="M40.5 22.3 L46.9 28.5 L29.8 45.9 L15.2 31.1 L31 15.4 V10.8 A3 3 0 0 1 37 10.8 V27.4" fill="none" stroke="#e2e2e2" stroke-width="2" stroke-linejoin="miter"/>
<path d="M40.2 20.9 Q44 17.8 48 18.6 Q55.5 20 55.8 30 Q56 40 52.6 48 Q51.5 36 48.3 29 Q46.5 27 40.2 20.9 Z" fill="#0a64b8" stroke="#8cc8f8" stroke-width="1.3" stroke-linejoin="round"/></svg>
<div style="left:2280px;top:456px;width:600px;height:48px;background:#5b5b5b"></div>
<svg style="left:2294px;top:470px;" width="22" height="20" viewBox="0 0 22 20"><path d="M4 6 L11 13 L18 6" fill="none" stroke="#e8e8e8" stroke-width="2.4" stroke-linecap="round" stroke-linejoin="round"/></svg>
<div class="t" style="left:2325.0px;top:464.6px;font-size:27.62px;line-height:27.62px;color:#e8e8e8;font-weight:400;letter-spacing:-0.57px;-webkit-text-stroke:0.3px #e8e8e8;">Riempimento</div>
<div style="left:2314px;top:526px;width:28px;height:28px;background:radial-gradient(circle at 50% 40%,#c86a28,#a8501a);border-radius:50%"></div>
<div style="left:2322.5px;top:534.5px;width:11px;height:11px;background:#f4ece6;border-radius:50%"></div>
<div class="t" style="left:2355.0px;top:525.6px;font-size:26.89px;line-height:26.89px;color:#e8e8e8;font-weight:400;letter-spacing:-0.80px;-webkit-text-stroke:0.2px #e8e8e8;">Riempimento a tinta unita</div>
<div style="left:2314px;top:564px;width:28px;height:28px;background:linear-gradient(#4e4e4e,#5c5c5c);border-radius:50%;box-shadow:inset 0 1px 1px rgba(0,0,0,0.3)"></div>
<div class="t" style="left:2355.0px;top:563.6px;font-size:26.89px;line-height:26.89px;color:#e8e8e8;font-weight:400;letter-spacing:-0.94px;-webkit-text-stroke:0.2px #e8e8e8;">Riempimento sfumato</div>
<div style="left:2314px;top:602px;width:28px;height:28px;background:linear-gradient(#4e4e4e,#5c5c5c);border-radius:50%;box-shadow:inset 0 1px 1px rgba(0,0,0,0.3)"></div>
<div class="t" style="left:2355.0px;top:601.6px;font-size:26.89px;line-height:26.89px;color:#e8e8e8;font-weight:400;letter-spacing:-0.98px;-webkit-text-stroke:0.2px #e8e8e8;">Riempimento a immagine o trama</div>
<div style="left:2314px;top:640px;width:28px;height:28px;background:linear-gradient(#4e4e4e,#5c5c5c);border-radius:50%;box-shadow:inset 0 1px 1px rgba(0,0,0,0.3)"></div>
<div class="t" style="left:2355.0px;top:639.6px;font-size:26.89px;line-height:26.89px;color:#e8e8e8;font-weight:400;letter-spacing:-0.97px;-webkit-text-stroke:0.2px #e8e8e8;">Riempimento a motivo</div>
<div style="left:2316px;top:685px;width:28px;height:28px;background:linear-gradient(#4e4e4e,#5a5a5a);border-radius:6px"></div>
<div class="t" style="left:2357.0px;top:688.2px;font-size:26.89px;line-height:26.89px;color:#e8e8e8;font-weight:400;letter-spacing:-0.65px;-webkit-text-stroke:0.2px #e8e8e8;">Nascondi grafica di sfondo</div>
<div style="left:2316px;top:727px;width:528px;height:2px;background:#d0d0d0"></div>
<div class="t" style="left:2316.6px;top:746.9px;font-size:25.44px;line-height:25.44px;color:#e8e8e8;font-weight:400;letter-spacing:-0.59px;-webkit-text-stroke:0.2px #e8e8e8;">Colore</div>
<div style="left:2772px;top:741px;width:70px;height:46px;background:#3e3e3e;border-radius:7px;box-shadow:0 1px 2px rgba(0,0,0,0.35)"></div>
<svg style="left:2784px;top:742px;" width="34" height="30" viewBox="0 0 34 30"><path d="M5 16 L15 6 L24 15 L14 25 Z" fill="#f0f0f0"/>
<path d="M8.5 19.5 L18 10" stroke="#3a90e0" stroke-width="2.2"/>
<path d="M14 12 V4.5 Q14 2.5 16 2.5 Q18 2.5 18 4.5 V11" fill="none" stroke="#e8e8e8" stroke-width="1.4"/>
<path d="M21 11 Q28 11 28 18 Q28 22 26 26 Q25 20 22 16 Z" fill="#3a90e0"/></svg>
<div style="left:2782px;top:773px;width:36px;height:9px;background:#335b74;border-radius:1px"></div>
<svg style="left:2824px;top:758px;" width="14" height="12" viewBox="0 0 14 12"><path d="M1.5 2 H12.5 L7 10 Z" fill="#e0e0e0"/></svg>
<div class="t" style="left:2316.0px;top:807.5px;font-size:25.44px;line-height:25.44px;color:#e8e8e8;font-weight:400;letter-spacing:-0.39px;-webkit-text-stroke:0.2px #e8e8e8;">Trasparenza</div>
<div style="left:2497px;top:815px;width:210px;height:6px;background:#474747;border-radius:3px"></div>
<div style="left:2484px;top:805px;width:26px;height:26px;background:#9c9c9c;border-radius:50%"></div>
<div style="left:2717px;top:801px;width:125px;height:45px;background:#3e3e3e;border-radius:8px;box-shadow:0 1px 2px rgba(0,0,0,0.35)"></div>
<div style="left:2815px;top:806px;width:1px;height:35px;background:#2a2a2a"></div>
<div style="left:2816px;top:825px;width:26px;height:1px;background:#2a2a2a"></div>
<svg style="left:2822px;top:809px;" width="14" height="34" viewBox="0 0 14 34"><path d="M2 9 H12 L7 2 Z M2 23 H12 L7 31 Z" fill="#e0e0e0"/></svg>
<div class="t" style="left:2728.0px;top:813.1px;font-size:23.98px;line-height:23.98px;color:#e8e8e8;font-weight:400;letter-spacing:-1.66px;-webkit-text-stroke:0.3px #e8e8e8;">0%</div>
<div style="left:2343px;top:1694px;width:206px;height:40px;background:#6a6a6a;border-radius:10px"></div>
<div class="t" style="left:2364.0px;top:1701.1px;font-size:24.71px;line-height:24.71px;color:#ececec;font-weight:400;letter-spacing:0.46px;-webkit-text-stroke:0.3px #ececec;">Applica a tutto</div>
<div style="left:2574px;top:1694px;width:243px;height:40px;background:#6a6a6a;border-radius:10px"></div>
<div class="t" style="left:2594.0px;top:1701.1px;font-size:24.71px;line-height:24.71px;color:#ececec;font-weight:400;letter-spacing:0.16px;-webkit-text-stroke:0.3px #ececec;">Reimposta sfondo</div>
<svg style="left:2310px;top:1654px;" width="280" height="120" viewBox="0 0 280 120"><ellipse cx="137" cy="59" rx="127.5" ry="50" fill="none" stroke="#fb2a0a" stroke-width="5"/></svg>
<div class="t" style="left:47.0px;top:1765.1px;font-size:24.71px;line-height:24.71px;color:#ececec;font-weight:400;letter-spacing:0.40px;">Diapositiva 3 di 3</div>
<div class="t" style="left:284.0px;top:1765.1px;font-size:24.71px;line-height:24.71px;color:#ececec;font-weight:400;letter-spacing:0.18px;">Italiano (Italia)</div>
<svg style="left:476px;top:1756px;" width="50" height="40" viewBox="0 0 50 40"><circle cx="20.9" cy="11.1" r="4.2" fill="none" stroke="#f0f0f0" stroke-width="2.2"/>
<path d="M26.5 18.8 L31 16.3 Q34 14.3 32.3 12.3 Q30.8 10.8 28 12.3 Q21 16.3 14 12.5 Q11 11 9.4 12.6 Q8 15 11 16.2 L15.7 18.5 V24 L13 32 Q12.5 35.2 15.6 35.2 Q17.6 35.2 18.6 32.2 L21 26 L23 30" fill="none" stroke="#f0f0f0" stroke-width="2.2" stroke-linecap="round" stroke-linejoin="round"/>
<path d="M24 21.5 L37.5 34.5 M37.5 21.5 L24 34.5" stroke="#f0f0f0" stroke-width="1.9"/></svg>
<div class="t" style="left:520.6px;top:1765.1px;font-size:24.71px;line-height:24.71px;color:#ececec;font-weight:400;letter-spacing:0.38px;">Accessibilità: verifica</div>
<svg style="left:1800px;top:1760px;" width="34" height="32" viewBox="0 0 34 32"><path d="M10.5 10 L17 4.5 L23.5 10 Z" fill="#ececec"/><path d="M4 15.5 H30 M4 21.5 H30 M4 27.5 H18" stroke="#ececec" stroke-width="2.2"/></svg>
<div class="t" style="left:1840.0px;top:1765.1px;font-size:24.71px;line-height:24.71px;color:#ececec;font-weight:400;letter-spacing:-0.40px;">Note</div>
<svg style="left:1932px;top:1764px;" width="30" height="28" viewBox="0 0 30 28"><path d="M3 4 Q3 2 5 2 H27 Q29 2 29 4 V17 Q29 19 27 19 H14 L8 25.5 V19 H5 Q3 19 3 17 Z" fill="#ececec"/></svg>
<div class="t" style="left:1969.0px;top:1765.1px;font-size:24.71px;line-height:24.71px;color:#ececec;font-weight:400;letter-spacing:0.06px;">Commenti</div>
<div style="left:2104px;top:1754px;width:74px;height:46px;background:#585858"></div>
<svg style="left:2124px;top:1762px;" width="34" height="30" viewBox="0 0 34 30"><rect x="3" y="2" width="28" height="26" rx="2.5" fill="#f4f4f4"/><rect x="11" y="4" width="18" height="15.7" fill="#5a5a5a"/><rect x="11" y="22" width="18" height="4" fill="#5a5a5a"/><rect x="14.8" y="9.8" width="10.2" height="4.2" fill="#f4f4f4"/></svg>
<svg style="left:2196px;top:1764px;" width="34" height="28" viewBox="0 0 34 28"><rect x="2" y="2" width="12.5" height="8.5" rx="2.5" fill="#f4f4f4"/><rect x="20" y="2" width="12" height="8.5" rx="2.5" fill="#f4f4f4"/><rect x="2" y="16" width="12.5" height="8.5" rx="2.5" fill="#f4f4f4"/><rect x="20" y="16" width="12" height="8.5" rx="2.5" fill="#f4f4f4"/></svg>
<svg style="left:2268px;top:1762px;" width="34" height="30" viewBox="0 0 34 30"><path d="M2 4 Q9 2 16 4 V27 Q9 25 2 27 Z M32 4 Q25 2 18 4 V27 Q25 25 32 27 Z" fill="none" stroke="#f0f0f0" stroke-width="2"/><path d="M5 9 H13 M5 13 H13 M5 17 H13 M5 21 H13 M21 9 H29 M21 13 H29 M21 17 H29 M21 21 H29" stroke="#f0f0f0" stroke-width="1.6"/></svg>
<svg style="left:2340px;top:1764px;" width="34" height="28" viewBox="0 0 34 28"><rect x="2" y="2" width="29" height="3" fill="#f0f0f0"/><rect x="4" y="4" width="25" height="15" fill="none" stroke="#f0f0f0" stroke-width="2"/><rect x="10" y="9" width="12" height="2.4" fill="#f0f0f0"/><path d="M16.5 19 V25 M11 25.5 H22" stroke="#f0f0f0" stroke-width="2"/></svg>
<div style="left:2408px;top:1776px;width:16px;height:3.5px;background:#f0f0f0"></div>
<div style="left:2438px;top:1773px;width:200px;height:8.5px;background:#7a7a7a;border-radius:4px"></div>
<div style="left:2513px;top:1761px;width:31.5px;height:31.5px;background:#a4a4a4;border-radius:50%"></div>
<div style="left:2652px;top:1775.5px;width:16px;height:3.5px;background:#f0f0f0"></div>
<div style="left:2658.3px;top:1769px;width:3.5px;height:16.5px;background:#f0f0f0"></div>
<div class="t" style="left:2709.0px;top:1765.3px;font-size:23.98px;line-height:23.98px;color:#ececec;font-weight:400;letter-spacing:1.00px;">90%</div>
<svg style="left:2804px;top:1762px;" width="30" height="30" viewBox="0 0 30 30"><rect x="2" y="2" width="26" height="26" fill="none" stroke="#f0f0f0" stroke-width="2.2"/><path d="M15 7.5 V12 M15 18 V22.5 M7.5 15 H12 M18 15 H22.5" stroke="#f0f0f0" stroke-width="1.5"/><path d="M12.3 8.5 L15 5 L17.7 8.5 Z M12.3 21.5 L15 25 L17.7 21.5 Z M8.5 12.3 L5 15 L8.5 17.7 Z M21.5 12.3 L25 15 L21.5 17.7 Z" fill="#f0f0f0"/></svg>
</body></html>
